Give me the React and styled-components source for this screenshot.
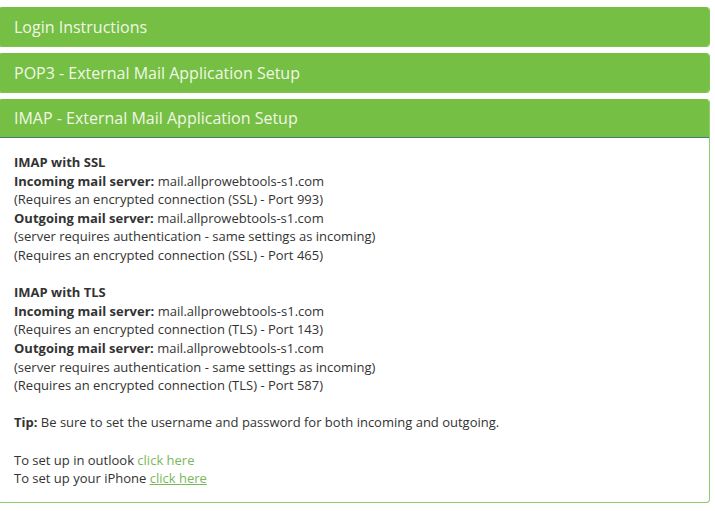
import React from 'react'
import styled, { createGlobalStyle } from 'styled-components'

const GlobalStyle = createGlobalStyle`
  body {
    margin: 0;
    background: #ffffff;
    font-family: "Open Sans", "Liberation Sans", sans-serif;
  }
`;

export default function App() {
  return (
    <>
      <GlobalStyle />
      <Page>
        <Panel>
          <Heading>Login Instructions</Heading>
        </Panel>
        <Panel>
          <Heading>POP3 - External Mail Application Setup</Heading>
        </Panel>
        <Panel $open>
          <Heading $open>IMAP - External Mail Application Setup</Heading>
          <Body>
            <b>IMAP with SSL</b><br />
            <b>Incoming mail server:</b> mail.allprowebtools-s1.com<br />
            (Requires an encrypted connection (SSL) - Port 993)<br />
            <b>Outgoing mail server:</b> mail.allprowebtools-s1.com<br />
            (server requires authentication - same settings as incoming)<br />
            (Requires an encrypted connection (SSL) - Port 465)<br />
            <br />
            <b>IMAP with TLS</b><br />
            <b>Incoming mail server:</b> mail.allprowebtools-s1.com<br />
            (Requires an encrypted connection (TLS) - Port 143)<br />
            <b>Outgoing mail server:</b> mail.allprowebtools-s1.com<br />
            (server requires authentication - same settings as incoming)<br />
            (Requires an encrypted connection (TLS) - Port 587)<br />
            <br />
            <b>Tip:</b> Be sure to set the username and password for both incoming and outgoing.<br />
            <br />
            To set up in outlook <Link href="#">click here</Link><br />
            To set up your iPhone <Link href="#" $underline>click here</Link>
          </Body>
        </Panel>
      </Page>
    </>
  )
}

const Page = styled.div`
  padding-top: 7px;
  width: 710px;
  display: flex;
  flex-direction: column;
  gap: 6px;
`;

const Panel = styled.div`
  margin-left: -2px;
  border-radius: 4px;
  background: #ffffff;
  border: 1px solid ${p => (p.$open ? '#8ccc6c' : '#7cc352')};
  border-top: none;
  overflow: hidden;
`;

const Heading = styled.div`
  height: 39px;
  box-sizing: border-box;
  padding: 0 0 0 15px;
  display: flex;
  align-items: center;
  background: #74bf44;
  color: #f2f7e4;
  font-size: 16px;
  border-bottom: ${p => (p.$open ? '1px solid #3d7f78' : 'none')};
`;

const Body = styled.div`
  padding: 15px 15px 14px 15px;
  font-size: 13px;
  line-height: 18.6px;
  color: #333333;

  b {
    font-weight: 700;
  }
`;

const Link = styled.a`
  color: #79b85a;
  text-decoration: ${p => (p.$underline ? 'underline' : 'none')};
`;
